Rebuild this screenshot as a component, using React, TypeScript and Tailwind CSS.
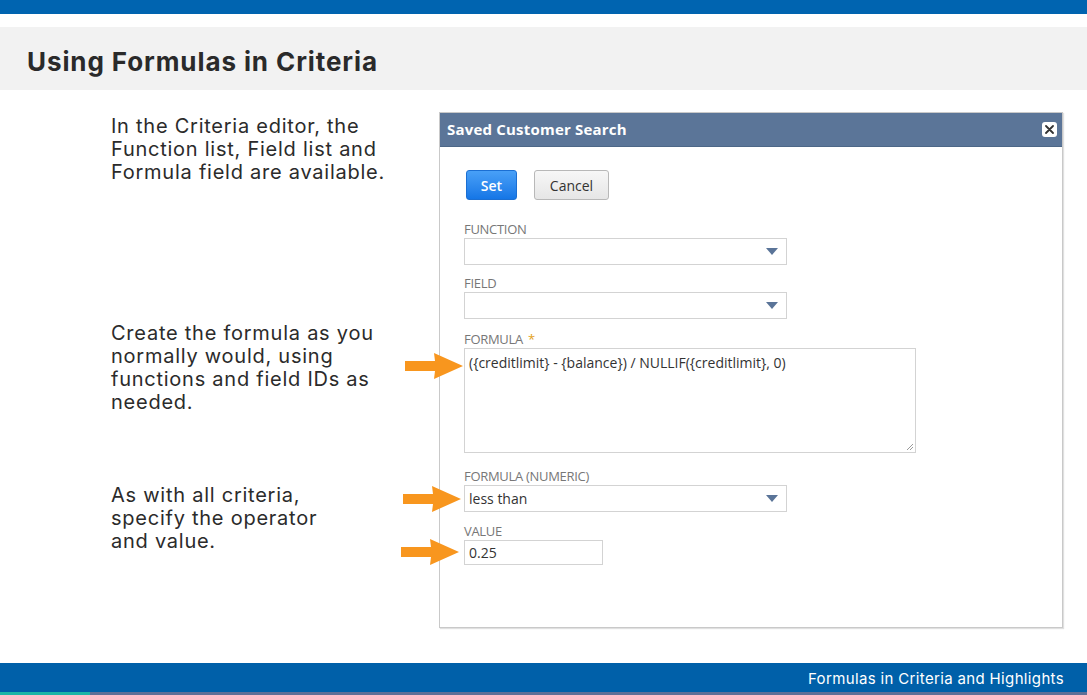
import React from "react";

const sans = { fontFamily: '"Inter", "Liberation Sans", sans-serif' };
const ui = { fontFamily: '"Open Sans", "Liberation Sans", sans-serif' };

function Arrow({ className = "" }: { className?: string }) {
	return (
		<svg className={`absolute ${className}`} width="58" height="26" viewBox="0 0 58 26">
			<polygon points="0,8 30,8 29,0 58,13 29,26 30,18 0,18" fill="#f8961e" />
		</svg>
	);
}

function Caret() {
	return (
		<svg width="12" height="7" viewBox="0 0 12 7" className="mr-[8px]">
			<polygon points="0,0 12,0 6,7" fill="#5a7498" />
		</svg>
	);
}

function Label({ children, star = false }: { children: React.ReactNode; star?: boolean }) {
	return (
		<div className="h-[16px] mb-[2px] pt-[1px] text-[13px] leading-[16px] text-[#777] uppercase tracking-[-0.3px]">
			{children}
			{star && <span className="text-[#e3a21a] ml-[5px]">*</span>}
		</div>
	);
}

function Select({ value = "", arrow }: { value?: string; arrow?: string }) {
	return (
		<div className="relative w-[323px] h-[27px] border border-[#d3d3d3] bg-white flex items-center justify-between pl-[4px]">
			<span className="text-[14px] text-[#333]">{value}</span>
			<Caret />
			{arrow && <Arrow className={arrow} />}
		</div>
	);
}

export default function App() {
	return (
		<div className="w-[1087px] h-[695px] bg-white flex flex-col overflow-hidden" style={sans}>
			<div className="h-[14px] bg-[#0064b0]" />
			<div className="h-[13px]" />
			<div className="h-[63px] bg-[#f2f2f2] flex items-center pl-[27px] pt-[6px]">
				<h1 className="text-[26px] font-bold text-[#2a2a2a] tracking-[0.9px]">Using Formulas in Criteria</h1>
			</div>

			<div className="flex-1 flex">
				<div className="w-[439px] pl-[111px] pt-[25px] text-[20px] leading-[23px] text-[#2b2b2b] tracking-[0.75px]">
					<p>In the Criteria editor, the<br />Function list, Field list and<br />Formula field are available.</p>
					<p className="mt-[138px]">Create the formula as you<br />normally would, using<br />functions and field IDs as<br />needed.</p>
					<p className="mt-[70px]">As with all criteria,<br />specify the operator<br />and value.</p>
				</div>

				<div className="mt-[22px] w-[624px] h-[516px] border border-[#c9c9c9] shadow-[1px_1px_1px_rgba(0,0,0,0.12)] flex flex-col" style={ui}>
					<div className="h-[34px] bg-[#5b7598] border-b border-[#4d6787] flex items-center justify-between pl-[7px] pr-[5px]">
						<span className="text-[15px] font-bold text-white tracking-[0.2px]">Saved Customer Search</span>
						<span className="w-[15px] h-[15px] bg-white rounded-[3px] flex items-center justify-center">
							<svg width="9" height="9" viewBox="0 0 9 9">
								<path d="M1 1L8 8M8 1L1 8" stroke="#333" strokeWidth="1.8" strokeLinecap="round" />
							</svg>
						</span>
					</div>

					<div className="pl-[24px] pt-[23px] flex flex-col">
						<div className="flex gap-[17px] pl-[2px]">
							<button className="w-[51px] h-[30px] rounded-[3px] border border-[#1b6fd3] bg-gradient-to-b from-[#48a0f7] to-[#1476e6] text-white text-[14px] font-semibold">
								Set
							</button>
							<button className="w-[75px] h-[30px] rounded-[3px] border border-[#b8b8b8] bg-gradient-to-b from-[#f7f7f7] to-[#e6e6e6] text-[#333] text-[14px]">
								Cancel
							</button>
						</div>

						<div className="mt-[20px]">
							<Label>Function</Label>
							<Select />
						</div>

						<div className="mt-[9px]">
							<Label>Field</Label>
							<Select />
						</div>

						<div className="mt-[11px]">
							<Label star>Formula</Label>
							<div className="relative w-[452px] h-[105px] border border-[#d3d3d3] bg-white px-[4px] pt-[1px]">
								<span className="text-[14px] text-[#333]">({"{"}creditlimit{"}"} - {"{"}balance{"}"}) / NULLIF({"{"}creditlimit{"}"}, 0)</span>
								<svg className="absolute right-[1px] bottom-[1px]" width="9" height="9" viewBox="0 0 9 9">
									<path d="M8 2L2 8M8 5L5 8" stroke="#9a9a9a" strokeWidth="1" />
								</svg>
								<Arrow className="left-[-60px] top-[4px]" />
							</div>
						</div>

						<div className="mt-[14px]">
							<Label>Formula (Numeric)</Label>
							<Select value="less than" arrow="left-[-62px] top-[0px]" />
						</div>

						<div className="mt-[10px]">
							<Label>Value</Label>
							<div className="relative w-[139px] h-[25px] border border-[#d3d3d3] bg-white flex items-center pl-[4px]">
								<span className="text-[14px] text-[#333]">0.25</span>
								<Arrow className="left-[-64px] top-[-2px]" />
							</div>
						</div>
					</div>
				</div>
			</div>

			<div className="h-[32px] flex flex-col">
				<div className="flex-1 bg-[#0060a9] flex items-center justify-end pr-[23px] pt-[3px]">
					<span className="text-[15px] text-white tracking-[0.35px]">Formulas in Criteria and Highlights</span>
				</div>
				<div className="h-[3px] flex">
					<div className="w-[90px] bg-[#1cb5a6]" />
					<div className="flex-1 bg-[#5f6f97]" />
				</div>
			</div>
		</div>
	);
}
